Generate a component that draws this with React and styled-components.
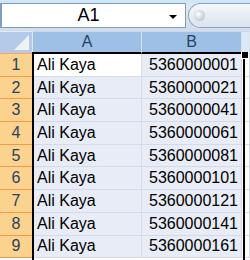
import React from "react";
import styled, { createGlobalStyle } from "styled-components";

const Global = createGlobalStyle`
  html, body {
    margin: 0;
    padding: 0;
    background: #ffffff;
    overflow: hidden;
  }
`;

const Page = styled.div`
  width: 250px;
  height: 260px;
  overflow: hidden;
  font-family: "Liberation Sans", Arial, sans-serif;
`;

const Toolbar = styled.div`
  height: 31px;
  box-sizing: border-box;
  padding-top: 3px;
  display: flex;
  align-items: flex-start;
  background: linear-gradient(#cfe6f6 0, #cfe6f6 3px, #dfe8f3 3px, #d2dcea 100%);
  border-top: 0;
`;

const NameBox = styled.div`
  width: 186px;
  height: 25px;
  box-sizing: border-box;
  border: 1px solid #7f9dc3;
  border-left-width: 2px;
  background: #ffffff;
  display: flex;
  align-items: center;
  position: relative;
`;

const NameText = styled.span`
  flex: 1;
  text-align: center;
  font-size: 18px;
  color: #000;
  padding-left: 6px;
`;

const Arrow = styled.span`
  width: 0;
  height: 0;
  border-left: 4px solid transparent;
  border-right: 4px solid transparent;
  border-top: 4px solid #000;
  margin-right: 8px;
  margin-top: 2px;
`;

const Pill = styled.div`
  margin-left: 2px;
  flex: 1;
  height: 25px;
  box-sizing: border-box;
  border: 1px solid #8aa3c4;
  border-right: 0;
  border-radius: 13px 0 0 13px;
  background: linear-gradient(#f4f7fb, #dbe3ee);
  display: flex;
  align-items: center;
  padding-left: 5px;
`;

const Knob = styled.span`
  width: 11px;
  height: 11px;
  border-radius: 50%;
  background: radial-gradient(circle at 40% 40%, #ffffff 0, #c9d1dc 60%, #aab5c4 100%);
`;

const Sheet = styled.div`
  position: relative;
  display: grid;
  grid-template-columns: 33px 109px 100px 1fr;
`;

const Corner = styled.div`
  height: 23px;
  box-sizing: border-box;
  background: #b3cbe9;
  border-right: 1px solid #dce7f4;
  border-bottom: 1px solid #fda55f;
  border-top: 1px solid #e4edf7;
  position: relative;
  &::after {
    content: "";
    position: absolute;
    right: 3px;
    bottom: 3px;
    width: 0;
    height: 0;
    border-left: 15px solid transparent;
    border-bottom: 15px solid #eef1f6;
  }
`;

const ColHead = styled.div`
  height: 23px;
  box-sizing: border-box;
  background: ${(p) => (p.$selected ? "#9fc0e6" : "#dde8f5")};
  border-top: 1px solid #c5d8ee;
  border-right: 1px solid #d6e3f2;
  border-bottom: ${(p) => (p.$selected ? "2px solid #000" : "1px solid #9eb6ce")};
  display: flex;
  align-items: center;
  justify-content: center;
  font-size: 16px;
  color: #27415f;
`;

const RowHead = styled.div`
  height: 22.7px;
  box-sizing: border-box;
  background: #fcd28f;
  border-bottom: 1px solid #f29b47;
  border-right: 1px solid #f29b47;
  display: flex;
  align-items: center;
  justify-content: center;
  font-size: 16px;
  color: #27415f;
`;

const Cell = styled.div`
  height: 22.7px;
  box-sizing: border-box;
  background: ${(p) => (p.$active ? "#ffffff" : p.$selected ? "#e8ecf6" : "#ffffff")};
  border-bottom: 1px solid #d3dae8;
  border-right: 1px solid #d3dae8;
  display: flex;
  align-items: center;
  justify-content: ${(p) => (p.$right ? "flex-end" : "flex-start")};
  padding: 0 3px 0 4px;
  font-size: 16px;
  color: #000;
  white-space: nowrap;
  overflow: hidden;
`;

const Selection = styled.div`
  position: absolute;
  left: 32px;
  top: 21px;
  width: 213px;
  height: 260px;
  box-sizing: border-box;
  border-left: 2px solid #000;
  border-right: 2px solid #000;
  pointer-events: none;
`;

const Handle = styled.div`
  position: absolute;
  left: 241px;
  top: 21px;
  width: 6px;
  height: 6px;
  background: #000;
  border: 1px solid #fff;
  border-top: 0;
`;

const numbers = [
  "5360000001",
  "5360000021",
  "5360000041",
  "5360000061",
  "5360000081",
  "5360000101",
  "5360000121",
  "5360000141",
  "5360000161",
];

export default function App() {
  return (
    <Page>
      <Global />
      <Toolbar>
        <NameBox>
          <NameText>A1</NameText>
          <Arrow />
        </NameBox>
        <Pill>
          <Knob />
        </Pill>
      </Toolbar>
      <Sheet>
        <Corner />
        <ColHead $selected>A</ColHead>
        <ColHead $selected>B</ColHead>
        <ColHead />
        {numbers.map((n, i) => (
          <React.Fragment key={n}>
            <RowHead>{i + 1}</RowHead>
            <Cell $active={i === 0} $selected>
              Ali Kaya
            </Cell>
            <Cell $selected $right>
              {n}
            </Cell>
            <Cell />
          </React.Fragment>
        ))}
        <Selection />
        <Handle />
      </Sheet>
    </Page>
  );
}
